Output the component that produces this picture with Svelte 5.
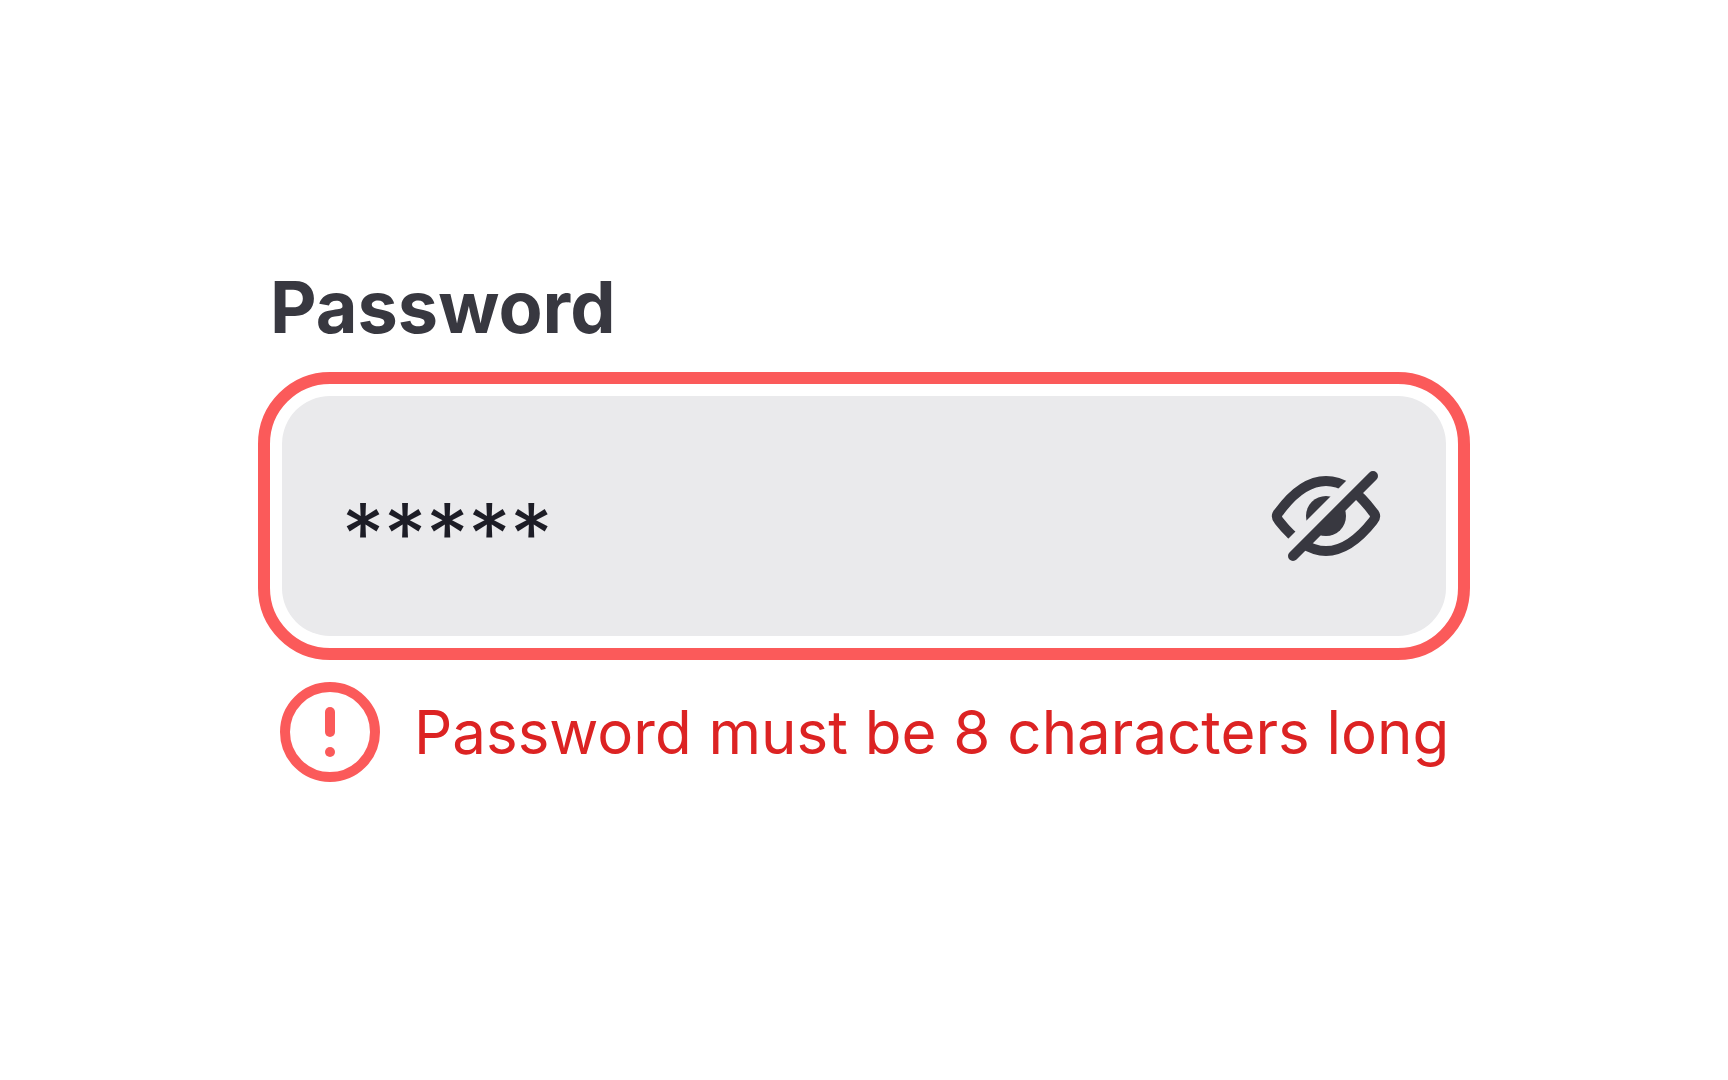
<script>
    let password = '*****';
    let visible = false;
    let error = 'Password must be 8 characters long';

    function toggleVisible() {
        visible = !visible;
    }
</script>

<main class="page">
    <div class="field">
        <label for="password">Password</label>

        <div class="control">
            <input
                id="password"
                type="text"
                bind:value={password}
                autocomplete="off"
                spellcheck="false"
                aria-invalid="true"
                aria-describedby="password-error"
            />
            <button type="button" class="toggle" aria-label="Show password" aria-pressed={visible} on:click={toggleVisible}>
                <svg viewBox="0 0 120 120" aria-hidden="true">
                    <clipPath id="eye-halves">
                        <path d="M0 0H105L0 105Z M127 0H120V7L7 120H120V0Z" />
                    </clipPath>
                    <g clip-path="url(#eye-halves)">
                        <path class="line" d="M13 56C24 41 40 25 60 25C80 25 96 41 107 56Q111 60 107 65C96 79 80 95 60 95C40 95 24 79 13 65Q9 60 13 56Z" />
                        <circle cx="60" cy="60" r="20" />
                    </g>
                    <path class="line" d="M27 100L107 20" />
                </svg>
            </button>
        </div>

        {#if error}
            <div class="error" id="password-error">
                <svg viewBox="0 0 120 120" aria-hidden="true">
                    <circle cx="60" cy="60" r="45" />
                    <path d="M60 40V60" />
                    <path d="M60 80V80" />
                </svg>
                <span>{error}</span>
            </div>
        {/if}
    </div>
</main>

<style>
    :global(body) {
        background: #fff;
    }

    .page {
        box-sizing: border-box;
        min-height: 100vh;
        padding: 24px 24px 48px;
        display: flex;
        align-items: center;
        justify-content: center;
        font-family: Inter, "Liberation Sans", sans-serif;
    }

    .field {
        width: 100%;
        max-width: 1188px;
    }

    label {
        display: block;
        margin-bottom: 46px;
        color: #383840;
        font-size: 72px;
        font-weight: 700;
        line-height: 86px;
    }

    .control {
        display: flex;
        align-items: center;
        height: 240px;
        margin: 0 12px;
        padding: 0 60px;
        box-sizing: border-box;
        background: #eaeaec;
        border-radius: 48px;
        outline: 12px solid #fb5a5a;
        outline-offset: 12px;
    }

    input {
        flex: 1;
        min-width: 0;
        padding: 36px 0 0;
        border: 0;
        outline: 0;
        background: transparent;
        color: #1d1d26;
        font-family: inherit;
        font-size: 84px;
        line-height: 96px;
    }

    .toggle {
        flex: none;
        width: 120px;
        height: 120px;
        padding: 0;
        border: 0;
        background: none;
        cursor: pointer;
    }

    .toggle svg {
        display: block;
        fill: #383840;
    }

    .toggle .line {
        fill: none;
        stroke: #383840;
        stroke-width: 10;
        stroke-linecap: round;
        stroke-linejoin: round;
    }

    .error {
        display: flex;
        align-items: center;
        gap: 24px;
        margin-top: 36px;
        color: #dc2323;
        font-size: 60px;
        line-height: 72px;
    }

    .error svg {
        flex: none;
        width: 120px;
        height: 120px;
        fill: none;
        stroke: #fb5a5a;
        stroke-width: 10;
        stroke-linecap: round;
    }
</style>
